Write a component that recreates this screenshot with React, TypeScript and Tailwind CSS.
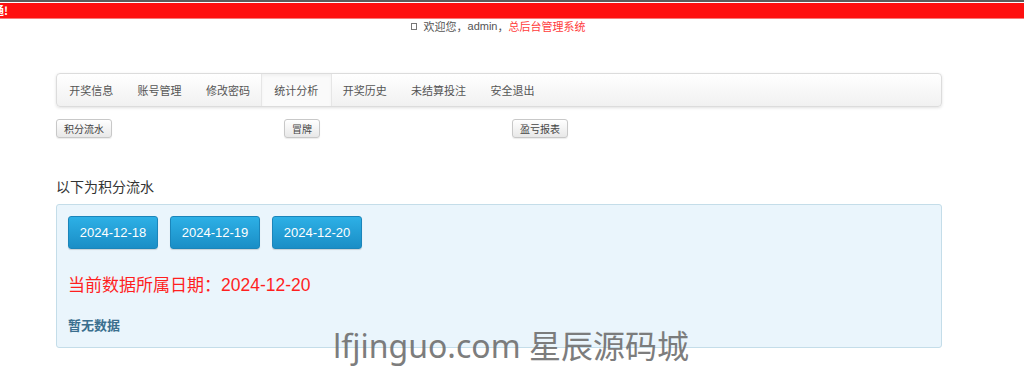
import React from "react";

const cjk = { fontFamily: '"Noto Sans CJK SC", "Liberation Sans", sans-serif' };
const arial = { fontFamily: '"Liberation Sans", "Noto Sans CJK SC", sans-serif' };

export default function App() {
  const nav = ["开奖信息", "账号管理", "修改密码", "统计分析", "开奖历史", "未结算投注", "安全退出"];
  return (
    <div className="relative w-[1024px] h-[385px] overflow-hidden bg-white" style={cjk}>
      {/* top bar */}
      <div className="h-[2px] bg-[#5c5c5c]" />
      <div className="h-[1px] bg-white" />
      <div className="h-[15px] bg-[#fe1010] overflow-hidden flex items-center">
        <div className="w-[8px] flex justify-end whitespace-nowrap text-[11px] leading-none font-bold text-white">
          欢迎访问系统，祝您使用畅通!
        </div>
      </div>
      <div className="h-[1px] bg-[#f87a7a]" />

      {/* welcome */}
      <div className="flex justify-center pr-[28px] h-[14px] items-center text-[11px] leading-none text-[#555]">
        <span className="inline-block w-[6px] h-[7px] border border-[#777] mr-[7px]" />
        <span>欢迎您，</span>
        <span style={arial}>admin</span>
        <span>，</span>
        <span className="text-[#ff3c3c]">总后台管理系统</span>
      </div>

      <div className="ml-[56px] w-[886px]">
        {/* navbar */}
        <div className="mt-[40px] h-[34px] rounded-[4px] border border-[#dcdcdc] bg-gradient-to-b from-white to-[#f1f1f1] shadow-[0_1px_3px_rgba(0,0,0,0.12)] flex items-stretch text-[11px] text-[#555]">
          {nav.map((n) => (
            <div
              key={n}
              className={
                "px-[12.2px] flex items-center " +
                (n === "统计分析" ? "bg-[#fafafa] border-x border-[#e6e6e6] shadow-[inset_0_2px_3px_rgba(0,0,0,0.04)] -mx-[1px]" : "")
              }
            >
              {n}
            </div>
          ))}
        </div>

        {/* small buttons */}
        <div className="mt-[12px] flex h-[19px] text-[10px] text-[#444]">
          <div className="w-[228px]">
            <button className="h-[19px] px-[7px] rounded-[3px] border border-[#c8c8c8] bg-gradient-to-b from-white to-[#e8e8e8] shadow-[0_1px_1px_rgba(0,0,0,0.08)] leading-none">积分流水</button>
          </div>
          <div className="w-[228px]">
            <button className="h-[19px] px-[7px] rounded-[3px] border border-[#c8c8c8] bg-gradient-to-b from-white to-[#e8e8e8] shadow-[0_1px_1px_rgba(0,0,0,0.08)] leading-none">冒牌</button>
          </div>
          <div className="w-[228px]">
            <button className="h-[19px] px-[7px] rounded-[3px] border border-[#c8c8c8] bg-gradient-to-b from-white to-[#e8e8e8] shadow-[0_1px_1px_rgba(0,0,0,0.08)] leading-none">盈亏报表</button>
          </div>
        </div>

        {/* title */}
        <div className="mt-[38px] text-[14px] leading-[20px] text-[#333]">以下为积分流水</div>

        {/* panel */}
        <div className="mt-[8px] h-[144px] rounded-[3px] border border-[#c4dde9] bg-[#eaf5fc] px-[11px] pt-[11px]">
          <div className="flex gap-[12px]">
            {["2024-12-18", "2024-12-19", "2024-12-20"].map((d) => (
              <button
                key={d}
                className="w-[90px] h-[33px] rounded-[3px] border border-[#1b85ba] bg-gradient-to-b from-[#2db0e6] to-[#1a8ec6] text-white text-[13px] shadow-[0_1px_1px_rgba(0,0,0,0.15)]"
                style={arial}
              >
                {d}
              </button>
            ))}
          </div>
          <div className="mt-[23px] text-[17px] leading-[24px] text-[#ff1f1f]">
            当前数据所属日期：<span className="text-[17.5px]" style={arial}>2024-12-20</span>
          </div>
          <div className="mt-[19px] text-[13px] font-bold text-[#3a6f8e] leading-[18px]">暂无数据</div>
        </div>
      </div>

      {/* watermark */}
      <div className="absolute left-[333px] top-[326px] text-[32px] leading-[40px] text-[#6f6f6f] opacity-90 whitespace-nowrap" style={{ fontFamily: '"Noto Sans", "Noto Sans CJK SC", sans-serif' }}>
        lfjinguo.com 星辰源码城
      </div>
    </div>
  );
}
